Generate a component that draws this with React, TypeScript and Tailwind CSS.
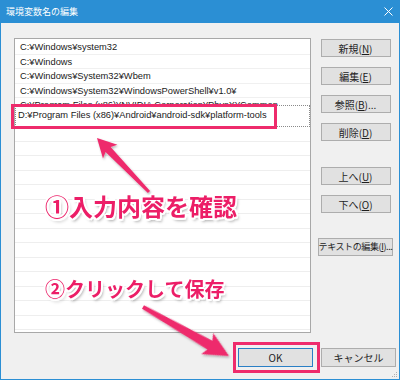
import React from "react";

const listItems = [
  "C:¥Windows¥system32",
  "C:¥Windows",
  "C:¥Windows¥System32¥Wbem",
  "C:¥Windows¥System32¥WindowsPowerShell¥v1.0¥",
];

const editingItem = "D:¥Program Files (x86)¥Android¥android-sdk¥platform-tools";

function Arrow({
  x1,
  y1,
  x2,
  y2,
  head,
  hw,
  sw0,
  sw1,
}: {
  x1: number;
  y1: number;
  x2: number;
  y2: number;
  head: number;
  hw: number;
  sw0: number;
  sw1: number;
}) {
  const len = Math.hypot(x2 - x1, y2 - y1);
  const angle = (Math.atan2(y2 - y1, x2 - x1) * 180) / Math.PI;
  const pts = [
    [0, -sw0],
    [len - head + 3, -sw1],
    [len - head, -hw],
    [len, 0],
    [len - head, hw],
    [len - head + 3, sw1],
    [0, sw0],
  ]
    .map((p) => p.join(","))
    .join(" ");
  return (
    <polygon
      points={pts}
      transform={`translate(${x1} ${y1}) rotate(${angle})`}
    />
  );
}

function DialogButton({
  label,
  accel,
  suffix,
  wide,
}: {
  label: string;
  accel: string;
  suffix?: string;
  wide?: boolean;
}) {
  return (
    <div
      className={`${wide ? "w-[75px] text-[9px] tracking-[-0.4px]" : "w-[70px] text-[10px]"} h-[18px] flex items-center justify-center whitespace-nowrap bg-[#e1e1e1] border border-[#adadad] text-[#1e1e1e]`}
    >
      {label}(<span className="underline">{accel}</span>){suffix}
    </div>
  );
}

export default function App() {
  return (
    <div className="relative w-[400px] h-[380px] flex flex-col bg-[#f0f0f0] border-x border-b border-[#2b8fd4] font-['Liberation_Sans','Noto_Sans_CJK_JP',sans-serif] overflow-hidden">
      {/* title bar */}
      <div className="h-[23px] shrink-0 flex items-center justify-between bg-[#2b8fd4] pl-[6px] pr-[7px] -mx-px">
        <span className="text-[9px] text-white font-['Noto_Sans_CJK_JP',sans-serif]">
          環境変数名の編集
        </span>
        <svg width="9" height="9" viewBox="0 0 9 9">
          <path d="M0.5 0.5 L8.5 8.5 M8.5 0.5 L0.5 8.5" stroke="#fff" strokeWidth="1" />
        </svg>
      </div>

      {/* body */}
      <div className="flex pl-[13px] pt-[15px] gap-[7px]">
        <div className="w-[297px] h-[295px] bg-white border border-[#a8a8a8] pt-px overflow-hidden text-[9.3px] text-[#1a1a1a]">
          {listItems.map((t) => (
            <div
              key={t}
              className="h-[14.5px] leading-[14.5px] pl-[5px] border-b border-[#f0f0f0] whitespace-nowrap"
            >
              {t}
            </div>
          ))}
          <div className="h-[7px] overflow-hidden pl-[5px] whitespace-nowrap leading-[14.5px]">
            C:¥Program Files (x86)¥NVIDIA Corporation¥PhysX¥Common
          </div>
          <div className="h-[22px] flex items-center pl-[2px] border border-dotted border-[#8a8a8a] whitespace-nowrap">
            {editingItem}
          </div>
          {Array.from({ length: 14 }).map((_, i) => (
            <div key={i} className="h-[14.5px] border-b border-[#eeeeee]" />
          ))}
        </div>

        <div className="w-[75px] pt-px flex flex-col items-center font-['Noto_Sans_CJK_JP',sans-serif]">
          <div className="flex flex-col gap-[10px]">
            <DialogButton label="新規" accel="N" />
            <DialogButton label="編集" accel="E" />
            <DialogButton label="参照" accel="B" suffix="..." />
            <DialogButton label="削除" accel="D" />
          </div>
          <div className="flex flex-col gap-[10px] mt-[26px]">
            <DialogButton label="上へ" accel="U" />
            <DialogButton label="下へ" accel="O" />
          </div>
          <div className="mt-[25px]">
            <DialogButton label="テキストの編集" accel="I" suffix="..." wide />
          </div>
        </div>
      </div>

      {/* footer */}
      <div className="flex justify-end gap-[8px] pr-[3px] mt-[15px] text-[10px] text-[#1e1e1e] font-['Noto_Sans_CJK_JP',sans-serif]">
        <div className="w-[75px] h-[19px] flex items-center justify-center bg-[#e1e1e1] border border-[#2a7fc5]">
          OK
        </div>
        <div className="w-[75px] h-[19px] flex items-center justify-center bg-[#e1e1e1] border border-[#adadad]">
          キャンセル
        </div>
      </div>

      {/* resize grip */}
      <svg className="absolute right-[1px] bottom-[1px]" width="6" height="6" viewBox="0 0 6 6">
        <g fill="#b0b0b0">
          <rect x="4" y="0" width="1" height="1" />
          <rect x="2" y="2" width="1" height="1" />
          <rect x="4" y="2" width="1" height="1" />
          <rect x="0" y="4" width="1" height="1" />
          <rect x="2" y="4" width="1" height="1" />
          <rect x="4" y="4" width="1" height="1" />
        </g>
      </svg>

      {/* annotations */}
      <svg
        className="absolute inset-0 pointer-events-none"
        width="400"
        height="380"
        viewBox="0 0 400 380"
      >
        <defs>
          <filter id="sh" x="-20%" y="-20%" width="140%" height="140%">
            <feDropShadow dx="1" dy="1.5" stdDeviation="1" floodColor="#000" floodOpacity="0.3" />
          </filter>
        </defs>
        <g fill="none" stroke="#ee2b6c" strokeWidth="3">
          <rect x="11.5" y="105.5" width="263" height="22" />
          <rect x="233.5" y="343.5" width="84" height="28" />
        </g>
        <g fill="#ee2b6c" filter="url(#sh)">
          <Arrow x1={148} y1={192} x2={96} y2={138} head={19} hw={10} sw0={1.5} sw1={3.5} />
          <Arrow x1={142} y1={307} x2={228} y2={356} head={25} hw={12} sw0={2} sw1={5} />
        </g>
      </svg>

      <div className="absolute left-[44px] top-[194px] text-[24px] leading-none font-bold text-[#ec1e67] font-['Noto_Sans_CJK_JP',sans-serif] [text-shadow:2px_0_0_#fff,-2px_0_0_#fff,0_2px_0_#fff,0_-2px_0_#fff,1.5px_1.5px_0_#fff,-1.5px_1.5px_0_#fff,1.5px_-1.5px_0_#fff,-1.5px_-1.5px_0_#fff,2px_3px_3px_rgba(0,0,0,0.35)]">
        ①入力内容を確認
      </div>
      <div className="absolute left-[44px] top-[279px] text-[20px] leading-none font-bold text-[#ec1e67] font-['Noto_Sans_CJK_JP',sans-serif] [text-shadow:2px_0_0_#fff,-2px_0_0_#fff,0_2px_0_#fff,0_-2px_0_#fff,1.5px_1.5px_0_#fff,-1.5px_1.5px_0_#fff,1.5px_-1.5px_0_#fff,-1.5px_-1.5px_0_#fff,2px_3px_3px_rgba(0,0,0,0.35)]">
        ②クリックして保存
      </div>
    </div>
  );
}
